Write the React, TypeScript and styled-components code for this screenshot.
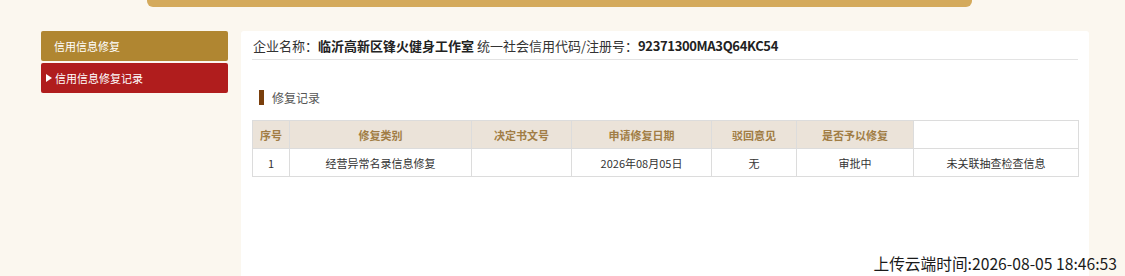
import React from "react";
import styled, { createGlobalStyle } from "styled-components";

const Global = createGlobalStyle`
  html, body { margin: 0; padding: 0; background: #fbf7ef; }
  body { font-family: "Microsoft YaHei", "Noto Sans CJK SC", "Noto Sans", sans-serif; color: #333; }
  * { box-sizing: border-box; }
`;

const Page = styled.div`
  position: relative;
  width: 1125px;
  height: 276px;
  overflow: hidden;
  background: #fbf7ef;
`;

const TopBar = styled.div`
  margin-left: 147px;
  width: 825px;
  height: 7px;
  background: #d4aa5c;
  border-radius: 0 0 6px 6px;
`;

const Body = styled.div`
  display: flex;
  gap: 13px;
  padding-left: 41px;
  margin-top: 24px;
`;

const Sidebar = styled.nav`
  width: 187px;
  display: flex;
  flex-direction: column;
  gap: 2px;
`;

const NavItem = styled.div<{ $active?: boolean }>`
  height: 30px;
  display: flex;
  align-items: center;
  padding-left: ${(p) => (p.$active ? "5px" : "13px")};
  background: ${(p) => (p.$active ? "#b01d1d" : "#b08631")};
  color: #fff;
  font-size: 11px;
  border-radius: 2px;
  gap: 2px;
`;

const Arrow = styled.span`
  width: 0;
  height: 0;
  border-top: 4px solid transparent;
  border-bottom: 4px solid transparent;
  border-left: 6px solid #fff;
  margin-right: 1px;
`;

const Panel = styled.main`
  width: 848px;
  height: 250px;
  background: #fff;
  border-radius: 3px 3px 0 0;
  padding: 0 11px;
`;

const InfoRow = styled.div`
  height: 29px;
  display: flex;
  align-items: center;
  padding-left: 1px;
  font-size: 13px;
  color: #333;
  border-bottom: 1px solid #e3e3e3;
  white-space: pre;
`;

const Strong = styled.b`
  font-weight: bold;
  color: #222;
`;

const Code = styled(Strong)`
  letter-spacing: -0.35px;
`;

const SectionTitle = styled.div`
  display: flex;
  align-items: center;
  gap: 8px;
  margin: 29px 0 0 7px;
  height: 16px;
  font-size: 12px;
  color: #555;
`;

const Marker = styled.span`
  width: 5px;
  height: 15px;
  background: #7a3f0c;
`;

const Table = styled.table`
  margin-top: 15px;
  width: 826px;
  border-collapse: collapse;
  table-layout: fixed;
  font-size: 11px;
`;

const Th = styled.th`
  height: 28px;
  background: #ebe3d9;
  color: #a17d45;
  font-weight: bold;
  border: 1px solid #dcdcdc;
  text-align: center;
  padding: 0;
`;

const BlankTh = styled(Th)`
  background: #fff;
`;

const Td = styled.td`
  height: 28px;
  border: 1px solid #dcdcdc;
  text-align: center;
  color: #333;
  padding: 0;
`;

const Footer = styled.div`
  position: absolute;
  right: 8px;
  top: 252px;
  font-size: 15.7px;
  color: #1a1a1a;
  font-family: "Microsoft YaHei", "Noto Sans CJK SC", sans-serif;
`;

const cols = [37, 182, 100, 140, 85, 117, 165];

export default function App() {
  return (
    <Page>
      <Global />
      <TopBar />
      <Body>
        <Sidebar>
          <NavItem>信用信息修复</NavItem>
          <NavItem $active>
            <Arrow />
            信用信息修复记录
          </NavItem>
        </Sidebar>
        <Panel>
          <InfoRow>
            企业名称：<Strong>临沂高新区锋火健身工作室</Strong> 统一社会信用代码/注册号：<Code>92371300MA3Q64KC54</Code>
          </InfoRow>
          <SectionTitle>
            <Marker />
            修复记录
          </SectionTitle>
          <Table>
            <colgroup>
              {cols.map((w, i) => (
                <col key={i} style={{ width: w }} />
              ))}
            </colgroup>
            <thead>
              <tr>
                <Th>序号</Th>
                <Th>修复类别</Th>
                <Th>决定书文号</Th>
                <Th>申请修复日期</Th>
                <Th>驳回意见</Th>
                <Th>是否予以修复</Th>
                <BlankTh />
              </tr>
            </thead>
            <tbody>
              <tr>
                <Td>1</Td>
                <Td>经营异常名录信息修复</Td>
                <Td></Td>
                <Td>2026年08月05日</Td>
                <Td>无</Td>
                <Td>审批中</Td>
                <Td>未关联抽查检查信息</Td>
              </tr>
            </tbody>
          </Table>
        </Panel>
      </Body>
      <Footer>上传云端时间:2026-08-05 18:46:53</Footer>
    </Page>
  );
}
